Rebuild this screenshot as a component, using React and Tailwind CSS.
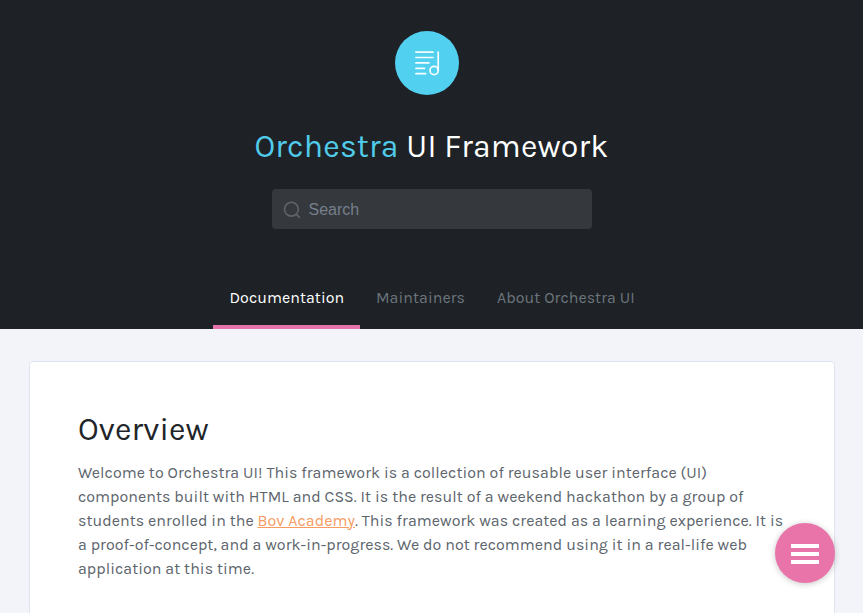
function NoteIcon() {
  return (
    <svg width="26" height="26" viewBox="0 0 26 26" fill="none" stroke="#f5fdff" strokeWidth="1.7" strokeLinecap="round">
      <path d="M1.9 2.2H19M1.9 7.5H19M1.9 12.9H14.9M1.9 18.3H10.6M1.9 23.7H11.6" />
      <path d="M24.2 2V20.5" />
      <circle cx="20.1" cy="20.5" r="4.1" />
    </svg>
  );
}

function SearchIcon() {
  return (
    <svg width="18" height="18" viewBox="0 0 18 18" fill="none" stroke="#606468" strokeWidth="1.6" strokeLinecap="round">
      <circle cx="8.4" cy="8.2" r="6.9" />
      <path d="M13.4 13.4L16.4 16.4" />
    </svg>
  );
}

export default function App() {
  return (
    <div className="h-[613px] overflow-hidden bg-[#f3f4f9] font-['Karla','Roboto',sans-serif] tracking-[0.045px]">
      <header className="flex h-[329px] flex-col items-center bg-[#1e2226] pt-[31px]">
        <div className="mr-[9px] flex size-16 items-center justify-center rounded-full bg-[#51d0f0]">
          <NoteIcon />
        </div>
        <h1 className="mt-8 h-10 text-[32px] leading-10 tracking-[0.17px] text-white">
          <span className="text-[#51cbea]">Orchestra</span> UI Framework
        </h1>
        <div className="mt-[22px] flex h-10 w-80 items-center gap-2 rounded bg-[#35383c] pt-px pl-[11px]">
          <SearchIcon />
          <span className="pt-px font-['Liberation_Sans',Arial,sans-serif] text-base tracking-normal text-[#76808c]">Search</span>
        </div>
        <nav className="mt-auto flex h-[59px] pl-px text-base leading-6 text-[#6c757d]">
          <a className="w-[147px] border-b-4 border-[#e573aa] pt-4 pr-4 pl-[16.5px] whitespace-nowrap text-white">Documentation</a>
          <a className="w-[121px] px-4 pt-4 whitespace-nowrap">Maintainers</a>
          <a className="w-[170px] px-4 pt-4 whitespace-nowrap">About Orchestra UI</a>
        </nav>
      </header>
      <main className="mr-7 ml-[29px] pt-8">
        <section className="h-[300px] rounded border border-[#dfe4f0] bg-white px-12 pt-12">
          <h2 className="h-10 text-[32px] leading-10 tracking-[0.12px] text-[#212529]">Overview</h2>
          <p className="mt-[11px] text-base leading-6 text-[#5c646c]">
            Welcome to Orchestra UI! This framework is a collection of reusable user interface (UI) components built with HTML and CSS. It is the result of a weekend hackathon by a group of students enrolled in the{" "}
            <a className="text-[#f79b62] underline">Bov Academy</a>. This framework was created as a learning experience. It is a proof-of-concept, and a work-in-progress. We do not recommend using it in a real-life web application at this time.
          </p>
        </section>
      </main>
      <button className="fixed right-7 bottom-[30px] flex size-[60px] flex-col items-center justify-center gap-1 rounded-full bg-[#e974aa] pt-0.5 shadow-[0_1px_6px_rgba(0,0,0,0.22)]">
        <span className="h-1 w-7 bg-white" />
        <span className="h-1 w-7 bg-white" />
        <span className="h-1 w-7 bg-white" />
      </button>
    </div>
  );
}
